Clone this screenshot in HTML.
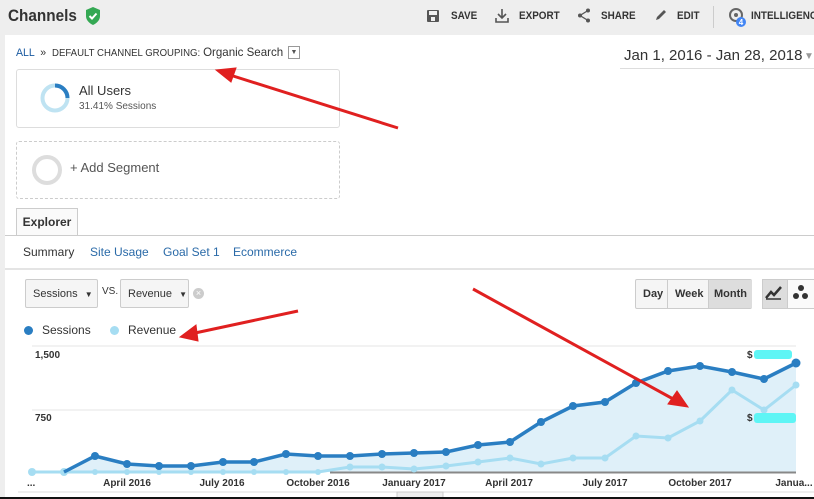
<!DOCTYPE html>
<html><head><style>
body{margin:0;width:814px;height:499px;overflow:hidden;background:#fff;font-family:"Liberation Sans",sans-serif;position:relative;}
.a{position:absolute;white-space:nowrap;}
.top{left:0;top:0;width:814px;height:35px;background:#eeeeee;}
.btn{font-size:11px;color:#333;font-weight:bold;transform:scaleX(.9);transform-origin:left;}
.box{border:1px solid #ddd;border-radius:3px;background:#fff;}
.sel{border:1px solid #ccc;border-radius:2px;background:#f5f5f5;font-size:11px;color:#333;height:27px;line-height:27px;padding-left:7px;box-sizing:border-box;}
</style></head><body>
<div class="a top"></div>
<div class="a" style="left:0;top:35px;width:5px;height:464px;background:#eee"></div>
<div class="a" style="left:8px;top:6px;font-size:17px;font-weight:bold;color:#333;transform:scaleX(.9);transform-origin:left">Channels</div>
<svg class="a" style="left:85px;top:7px" width="16" height="18" viewBox="0 0 16 18"><path d="M8 0L15 3V9C15 13 12 16 8 18C4 16 1 13 1 9V3Z" fill="#34a853"/><path d="M4.5 9l2.5 2.5 4.5-5" stroke="#fff" stroke-width="2" fill="none"/></svg>
<svg class="a" style="left:426px;top:9px" width="14" height="14"><rect x="1" y="1" width="12" height="12" rx="1" fill="#555"/><rect x="3" y="2" width="8" height="4" fill="#eee"/><rect x="5" y="8" width="4" height="4" fill="#eee"/></svg>
<div class="a btn" style="left:451px;top:10px">SAVE</div>
<svg class="a" style="left:495px;top:8px" width="14" height="15"><path d="M7 1v9M3 6l4 4 4-4M1 10v4h12v-4" stroke="#555" stroke-width="1.6" fill="none"/></svg>
<div class="a btn" style="left:519px;top:10px">EXPORT</div>
<svg class="a" style="left:577px;top:8px" width="14" height="15"><circle cx="11" cy="2.5" r="2" fill="#555"/><circle cx="3" cy="7.5" r="2" fill="#555"/><circle cx="11" cy="12.5" r="2" fill="#555"/><path d="M11 2.5L3 7.5L11 12.5" stroke="#555" stroke-width="1.3" fill="none"/></svg>
<div class="a btn" style="left:601px;top:10px">SHARE</div>
<svg class="a" style="left:654px;top:8px" width="14" height="14"><path d="M2 12l1-3 7-7 2 2-7 7z" fill="#555"/></svg>
<div class="a btn" style="left:677px;top:10px">EDIT</div>
<div class="a" style="left:713px;top:6px;width:1px;height:22px;background:#ccc"></div>
<svg class="a" style="left:727px;top:6px" width="22" height="22"><circle cx="9" cy="9" r="6" stroke="#666" stroke-width="2" fill="none"/><circle cx="9" cy="9" r="2" fill="#666"/><circle cx="14" cy="16" r="5" fill="#4285f4"/><text x="14" y="19" font-size="8" fill="#fff" text-anchor="middle" font-weight="bold" font-family="Liberation Sans">4</text></svg>
<div class="a btn" style="left:751px;top:10px">INTELLIGENCE</div>

<div class="a" style="left:16px;top:45px;font-size:11px;color:#333;transform:scaleX(.96);transform-origin:left"><span style="color:#1a5aa0">ALL</span> &nbsp;» &nbsp;<span style="font-size:10px;">DEFAULT CHANNEL GROUPING:</span> <span style="font-size:12px">Organic Search</span></div>
<div class="a" style="left:288px;top:46px;width:10px;height:11px;border:1px solid #999;font-size:7px;line-height:11px;text-align:center;color:#555;background:#fff">▼</div>
<div class="a" style="left:624px;top:47px;font-size:15px;color:#333">Jan 1, 2016 - Jan 28, 2018</div>
<div class="a" style="left:804px;top:51px;font-size:10px;color:#999">▼</div>
<div class="a" style="left:620px;top:68px;width:194px;height:1px;background:#ddd"></div>

<div class="a box" style="left:16px;top:69px;width:322px;height:57px"></div>
<svg class="a" style="left:39px;top:82px" width="32" height="32"><circle cx="16" cy="16" r="12.5" stroke="#bfe3f2" stroke-width="4" fill="none"/><path d="M16 3.5A12.5 12.5 0 0 1 28.5 16" stroke="#2a7ec2" stroke-width="4" fill="none"/></svg>
<div class="a" style="left:79px;top:83px;font-size:13px;color:#333">All Users</div>
<div class="a" style="left:79px;top:101px;font-size:10px;color:#555">31.41% Sessions</div>

<div class="a" style="left:16px;top:141px;width:322px;height:56px;border:1px dashed #ccc;border-radius:3px"></div>
<svg class="a" style="left:31px;top:154px" width="32" height="32"><circle cx="16" cy="16" r="13" stroke="#ddd" stroke-width="4" fill="none"/></svg>
<div class="a" style="left:70px;top:160px;font-size:13px;color:#555">+ Add Segment</div>

<div class="a" style="left:16px;top:208px;width:60px;height:27px;border:1px solid #ccc;border-bottom:none;background:#fafafa;font-size:12px;font-weight:bold;color:#333;line-height:27px;text-align:center">Explorer</div>
<div class="a" style="left:5px;top:235px;width:809px;height:1px;background:#ccc"></div>
<div class="a" style="left:23px;top:245px;font-size:12px;color:#333">Summary</div>
<div class="a" style="left:90px;top:245px;font-size:12px;color:#2a6aa8">Site Usage</div>
<div class="a" style="left:163px;top:245px;font-size:12px;color:#2a6aa8">Goal Set 1</div>
<div class="a" style="left:233px;top:245px;font-size:12px;color:#2a6aa8">Ecommerce</div>
<div class="a" style="left:5px;top:268px;width:809px;height:2px;background:#e4e4e4"></div>

<div class="a sel" style="left:25px;top:279px;width:73px;height:29px;line-height:29px">Sessions <span style="font-size:8px;margin-left:4px">▼</span></div>
<div class="a" style="left:102px;top:286px;font-size:10px;color:#333">VS.</div>
<div class="a sel" style="left:120px;top:279px;width:69px;height:29px;line-height:29px">Revenue <span style="font-size:8px;margin-left:4px">▼</span></div>
<div class="a" style="left:193px;top:288px;width:11px;height:11px;border-radius:50%;background:#ccc;color:#fff;font-size:9px;line-height:11px;text-align:center">×</div>

<div class="a" style="left:635px;top:279px;width:115px;height:28px;border:1px solid #ccc;border-radius:2px;background:#f5f5f5;font-size:11px;font-weight:bold;color:#333;line-height:28px">
<span style="position:absolute;left:7px">Day</span><span style="position:absolute;left:31px;top:0;width:1px;height:28px;background:#ccc"></span><span style="position:absolute;left:39px">Week</span><span style="position:absolute;left:72px;top:0;width:43px;height:28px;background:#ddd;border-left:1px solid #ccc;text-align:center">Month</span></div>
<div class="a" style="left:762px;top:279px;width:24px;height:28px;background:#ddd;border:1px solid #ccc"></div>
<svg class="a" style="left:765px;top:284px" width="18" height="16"><path d="M1 14L6 8 9 11 16 3" stroke="#333" stroke-width="2.5" fill="none"/><path d="M1 15h15" stroke="#333" stroke-width="1.5"/></svg>
<div class="a" style="left:787px;top:279px;width:27px;height:28px;background:#fafafa;border:1px solid #ccc"></div>
<svg class="a" style="left:792px;top:284px" width="18" height="18"><circle cx="9" cy="4" r="3" fill="#333"/><circle cx="4" cy="12" r="3" fill="#333"/><circle cx="13" cy="12" r="3" fill="#333"/></svg>

<div class="a" style="left:24px;top:326px;width:9px;height:9px;border-radius:50%;background:#2a7ec2"></div>
<div class="a" style="left:42px;top:323px;font-size:12px;color:#333">Sessions</div>
<div class="a" style="left:110px;top:326px;width:9px;height:9px;border-radius:50%;background:#a6ddf2"></div>
<div class="a" style="left:128px;top:323px;font-size:12px;color:#333">Revenue</div>

<svg class="a" style="left:0;top:340px" width="814" height="159" viewBox="0 340 814 159">
<line x1="32" y1="346" x2="796" y2="346" stroke="#e6e6e6"/>
<line x1="32" y1="410" x2="796" y2="410" stroke="#e6e6e6"/>
<polygon fill="#dff0f9" points="32,472 64,472 95,456 127,464 159,466 191,466 223,462 254,462 286,454 318,456 350,456 382,454 414,453 446,452 478,445 510,442 541,422 573,406 605,402 636,383 668,371 700,366 732,372 764,379 796,363 796,472"/>
<line x1="330" y1="472.5" x2="796" y2="472.5" stroke="#888" stroke-width="2"/>
<polyline fill="none" stroke="#a6ddf2" stroke-width="3" points="32,472 64,472 95,472 127,472 159,472 191,472 223,472 254,472 286,472 318,472 350,467 382,467 414,469 446,466 478,462 510,458 541,464 573,458 605,458 636,436 668,438 700,421 732,390 764,410 796,385"/>
<g fill="#a6ddf2"><circle cx="32" cy="472" r="4"/><circle cx="64" cy="472" r="4"/><circle cx="95" cy="472" r="3"/><circle cx="127" cy="472" r="3"/><circle cx="159" cy="472" r="3"/><circle cx="191" cy="472" r="3"/><circle cx="223" cy="472" r="3"/><circle cx="254" cy="472" r="3"/><circle cx="286" cy="472" r="3"/><circle cx="318" cy="472" r="3"/><circle cx="350" cy="467" r="3.5"/><circle cx="382" cy="467" r="3.5"/><circle cx="414" cy="469" r="3.5"/><circle cx="446" cy="466" r="3.5"/><circle cx="478" cy="462" r="3.5"/><circle cx="510" cy="458" r="3.5"/><circle cx="541" cy="464" r="3.5"/><circle cx="573" cy="458" r="3.5"/><circle cx="605" cy="458" r="3.5"/><circle cx="636" cy="436" r="3.5"/><circle cx="668" cy="438" r="3.5"/><circle cx="700" cy="421" r="3.5"/><circle cx="732" cy="390" r="3.5"/><circle cx="764" cy="410" r="3.5"/><circle cx="796" cy="385" r="3.5"/></g>
<polyline fill="none" stroke="#2a7ec2" stroke-width="3.5" points="64,472 95,456 127,464 159,466 191,466 223,462 254,462 286,454 318,456 350,456 382,454 414,453 446,452 478,445 510,442 541,422 573,406 605,402 636,383 668,371 700,366 732,372 764,379 796,363"/>
<g fill="#2a7ec2"><circle cx="95" cy="456" r="4"/><circle cx="127" cy="464" r="4"/><circle cx="159" cy="466" r="4"/><circle cx="191" cy="466" r="4"/><circle cx="223" cy="462" r="4"/><circle cx="254" cy="462" r="4"/><circle cx="286" cy="454" r="4"/><circle cx="318" cy="456" r="4"/><circle cx="350" cy="456" r="4"/><circle cx="382" cy="454" r="4"/><circle cx="414" cy="453" r="4"/><circle cx="446" cy="452" r="4"/><circle cx="478" cy="445" r="4"/><circle cx="510" cy="442" r="4"/><circle cx="541" cy="422" r="4"/><circle cx="573" cy="406" r="4"/><circle cx="605" cy="402" r="4"/><circle cx="636" cy="383" r="4"/><circle cx="668" cy="371" r="4"/><circle cx="700" cy="366" r="4"/><circle cx="732" cy="372" r="4"/><circle cx="764" cy="379" r="4"/><circle cx="796" cy="363" r="4.5"/></g>
<g font-family="Liberation Sans" font-size="10" fill="#333" font-weight="bold">
<text x="35" y="358">1,500</text><text x="35" y="421">750</text>
<text x="747" y="358">$</text><text x="747" y="421">$</text>
<g text-anchor="middle"><text x="127" y="486">April 2016</text><text x="222" y="486">July 2016</text><text x="318" y="486">October 2016</text><text x="414" y="486">January 2017</text><text x="509" y="486">April 2017</text><text x="605" y="486">July 2017</text><text x="700" y="486">October 2017</text><text x="794" y="486">Janua...</text></g>
<text x="27" y="486">...</text></g>
<rect x="754" y="350" width="38" height="9" fill="#5ef5f5" rx="3"/>
<rect x="754" y="413" width="42" height="10" fill="#5ef5f5" rx="3"/>
<line x1="18" y1="492" x2="814" y2="492" stroke="#ddd"/>
<rect x="397" y="492" width="46" height="7" fill="#eee" stroke="#ccc"/>
<rect x="0" y="497" width="814" height="2" fill="#111"/>
</svg>

<svg class="a" style="left:0;top:0" width="814" height="499">
<g stroke="#e02020" stroke-width="3" fill="#e02020">
<line x1="398" y1="128" x2="230" y2="75"/><polygon points="216,70 236,68 231,82" stroke-width="1"/>
<line x1="298" y1="311" x2="195" y2="333"/><polygon points="180,337 196,325 198,341" stroke-width="1"/>
<line x1="473" y1="289" x2="675" y2="400"/><polygon points="688,407 668,404 677,391" stroke-width="1"/>
</g></svg>
</body></html>
